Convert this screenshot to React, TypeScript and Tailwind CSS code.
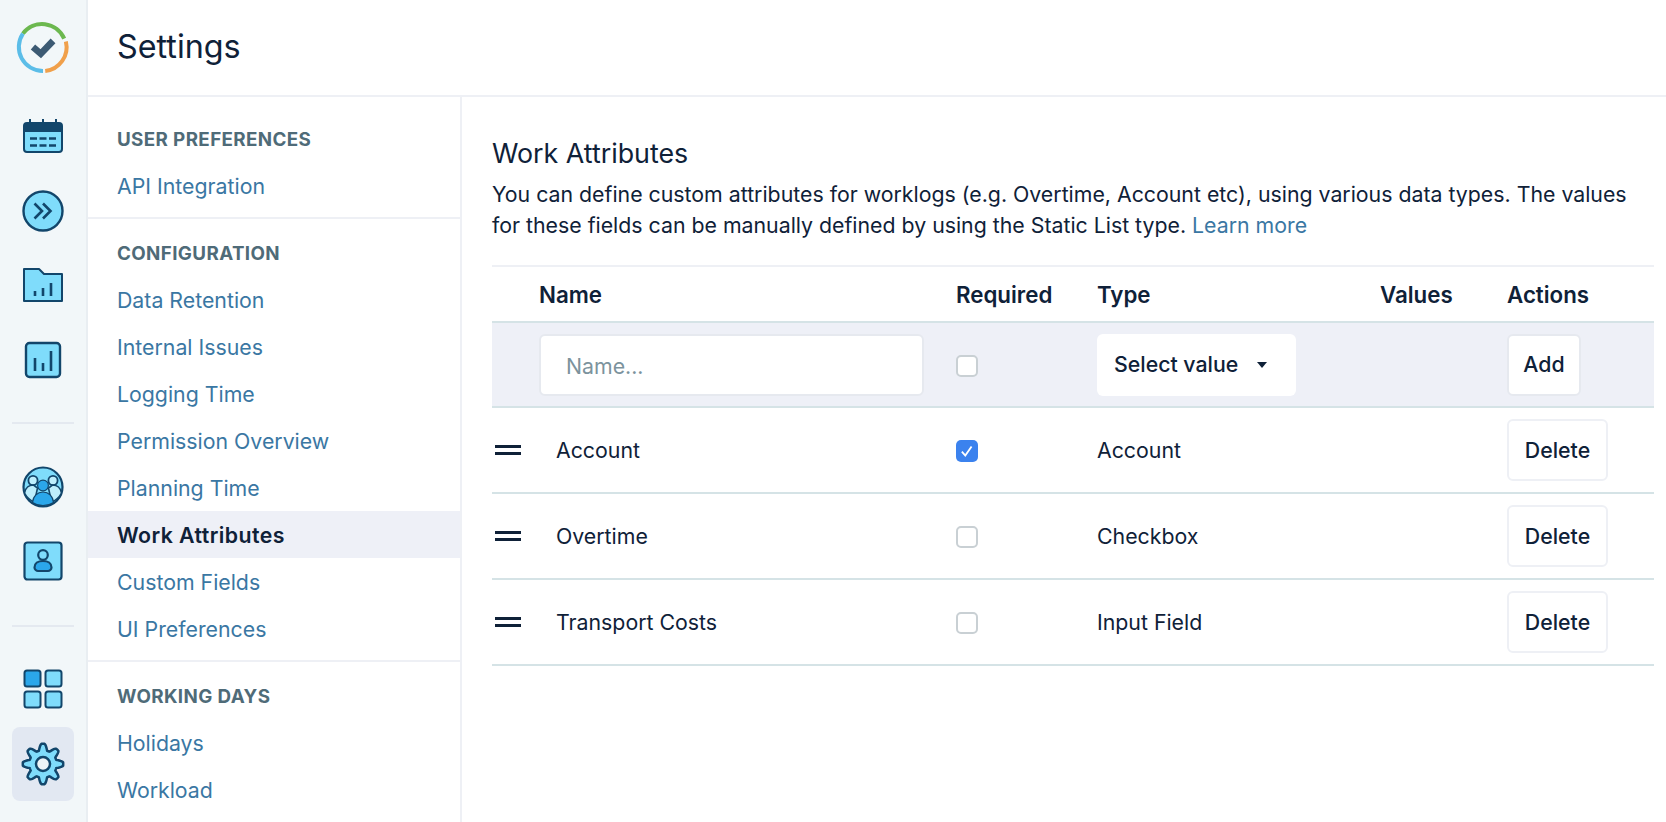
const font = { fontFamily: "Inter, 'Liberation Sans', sans-serif" };

function Logo() {
  return (
    <svg width="58" height="58" viewBox="0 0 52 52" fill="none" strokeWidth="3.6">
      <path d="M8 14 A21.500 21.500 0 0 1 45 18.500" stroke="#6cb84f" />
      <path d="M46.500 21 A21.500 21.500 0 0 1 28 47.500" stroke="#f0a04b" />
      <path d="M26 47.500 A21.500 21.500 0 0 1 8 14" stroke="#5bbde8" />
      <path d="M17 26 L24 32 L35 20.500" stroke="#3c5a73" strokeWidth="6" />
    </svg>
  );
}

function CalendarIcon() {
  return (
    <svg width="44" height="44" viewBox="0 0 44 44" fill="none">
      <rect x="3" y="9" width="38" height="29" rx="3" fill="#7fdcfb" stroke="#12466b" strokeWidth="2" />
      <path d="M3 12a3 3 0 0 1 3-3h32a3 3 0 0 1 3 3v6H3z" fill="#12466b" />
      <path d="M9 5v6M22 5v6M35 5v6" stroke="#12466b" strokeWidth="2" />
      <path d="M9 24.500h7M18.500 24.500h7M28 24.500h7M9 31.500h7M18.500 31.500h7M28 31.500h7" stroke="#12466b" strokeWidth="2.600" />
    </svg>
  );
}

function ForwardIcon() {
  return (
    <svg width="44" height="44" viewBox="0 0 44 44" fill="none">
      <circle cx="22" cy="22" r="19.500" fill="#7fdcfb" stroke="#12466b" strokeWidth="2.400" />
      <path d="M13.500 14.500l7.500 7.500-7.500 7.500M22 14.500l7.500 7.500-7.500 7.500" stroke="#12466b" strokeWidth="2.600" />
    </svg>
  );
}

function FolderIcon() {
  return (
    <svg width="44" height="44" viewBox="0 0 44 44" fill="none">
      <path d="M3 6h15l5 5h18v27H3z" fill="#7fdcfb" stroke="#12466b" strokeWidth="2" strokeLinejoin="round" />
      <path d="M14 33v-5M22 33v-8M30 33v-13" stroke="#12466b" strokeWidth="2.600" />
    </svg>
  );
}

function ChartIcon() {
  return (
    <svg width="44" height="44" viewBox="0 0 44 44" fill="none">
      <rect x="5" y="5" width="34" height="34" rx="3.500" fill="#7fdcfb" stroke="#12466b" strokeWidth="2.400" />
      <path d="M14 33v-13M22 33v-8M30 33v-20" stroke="#12466b" strokeWidth="2.600" />
    </svg>
  );
}

function TeamIcon() {
  return (
    <svg width="44" height="44" viewBox="0 0 44 44" fill="none">
      <circle cx="22" cy="22" r="19.500" fill="#7fdcfb" stroke="#12466b" strokeWidth="2.200" />
      <circle cx="12" cy="15.500" r="4.600" fill="#bdeefc" stroke="#12466b" strokeWidth="1.800" />
      <circle cx="32" cy="15.500" r="4.600" fill="#bdeefc" stroke="#12466b" strokeWidth="1.800" />
      <path d="M3.500 28c1-5.500 5-8 9-8l4 3-3 14a19 19 0 0 1-10-9zM40.500 28c-1-5.500-5-8-9-8l-4 3 3 14a19 19 0 0 0 10-9z" fill="#bdeefc" stroke="#12466b" strokeWidth="1.600" />
      <circle cx="22" cy="20.500" r="5.400" fill="#2ba7ea" stroke="#12466b" strokeWidth="1.200" />
      <path d="M11.500 37.500c.5-6.500 5-10.500 10.500-10.500s10 4 10.500 10.500a19 19 0 0 1-21 0z" fill="#2ba7ea" stroke="#12466b" strokeWidth="1.200" />
    </svg>
  );
}

function ContactIcon() {
  return (
    <svg width="44" height="44" viewBox="0 0 44 44" fill="none">
      <rect x="3.500" y="3.500" width="37" height="37" rx="3" fill="#7fdcfb" stroke="#12466b" strokeWidth="2.200" />
      <circle cx="22" cy="16" r="4.800" fill="#7fdcfb" stroke="#12466b" strokeWidth="2.200" />
      <path d="M13.500 28.500c0-4 3.500-6.500 8.500-6.500s8.500 2.500 8.500 6.500c0 2-2 3.500-3.500 3.500H17c-1.500 0-3.500-1.500-3.500-3.500z" fill="#2ba7ea" stroke="#12466b" strokeWidth="2.200" />
    </svg>
  );
}

function GridIcon() {
  return (
    <svg width="44" height="44" viewBox="0 0 44 44" fill="none" stroke="#12466b" strokeWidth="2">
      <rect x="3.500" y="3.500" width="16" height="16" rx="2.500" fill="#2ba7ea" />
      <rect x="24.500" y="3.500" width="16" height="16" rx="2.500" fill="#7fdcfb" />
      <rect x="3.500" y="24.500" width="16" height="16" rx="2.500" fill="#7fdcfb" />
      <rect x="24.500" y="24.500" width="16" height="16" rx="2.500" fill="#7fdcfb" />
    </svg>
  );
}

// eight rounded lobes, sampled around the circle, one lobe straight up
function gearPoints() {
  const pts: string[] = [];
  for (let i = 0; i < 240; i++) {
    const a = (i / 240) * Math.PI * 2;
    const wave = Math.max(-1, Math.min(1, Math.cos(a * 8) * 1.300));
    const r = 17 + 3.200 * wave;
    pts.push(`${(22 + r * Math.cos(a)).toFixed(2)},${(22 + r * Math.sin(a)).toFixed(2)}`);
  }
  return pts.join(" ");
}

function GearIcon() {
  return (
    <svg width="44" height="44" viewBox="0 0 44 44" fill="#7fdcfb" stroke="#12466b" strokeWidth="2.500" strokeLinejoin="round">
      <polygon points={gearPoints()} />
      <circle cx="22" cy="22" r="7" fill="#eef4f7" />
    </svg>
  );
}

function NavItem({ label, active }: { label: string; active?: boolean }) {
  return (
    <div className={active ? "flex h-[47px] items-center bg-[#eef0f7] pt-[2px] pl-[29px] text-[21.300px] font-semibold tracking-[0.02em] text-[#0f2138]" : "flex h-[47px] items-center pt-[2px] pl-[29px] text-[21.300px] text-[#3a77a3]"}>
      {label}
    </div>
  );
}

function NavHeading({ label }: { label: string }) {
  return <div className="mb-[10px] h-[28px] pt-[2px] pl-[29px] text-[18.800px] leading-[28px] font-bold tracking-[0.02em] text-[#4f6b78]">{label}</div>;
}

function Checkbox({ checked }: { checked?: boolean }) {
  if (checked) {
    return (
      <div className="mt-[2px] flex h-[22px] w-[22px] items-center justify-center rounded-[5px] bg-[#3b82ee]">
        <svg width="16" height="16" viewBox="0 0 14 14" fill="none">
          <path d="M2.500 7.500L5.500 11L11 3" stroke="white" strokeWidth="1.600" />
        </svg>
      </div>
    );
  }
  return <div className="mt-[2px] h-[22px] w-[22px] rounded-[5px] border-2 border-[#c9d0d4] bg-white" />;
}

const grid = "grid grid-cols-[47px_417px_141px_283px_127px_1fr] items-center";

function Row({ name, type, checked }: { name: string; type: string; checked?: boolean }) {
  return (
    <div className={`${grid} h-[86px] border-b-2 border-[#d5e3e6]`}>
      <div className="flex flex-col gap-[4px] pl-[3px]">
        <div className="h-[3px] w-[26px] bg-[#0f2138]" />
        <div className="h-[3px] w-[26px] bg-[#0f2138]" />
      </div>
      <div className="pt-[2px] pl-[17px]">{name}</div>
      <Checkbox checked={checked} />
      <div className="pt-[2px]">{type}</div>
      <div />
      <button type="button" className="h-[62px] w-[101px] rounded-[6px] border-2 border-[#eef0f5] bg-white pt-[2px] font-medium">
        Delete
      </button>
    </div>
  );
}

export default function App() {
  return (
    <div className="flex h-screen w-full overflow-hidden bg-white text-[21.300px] text-[#0f2138]" style={font}>
      {/* Rail */}
      <div className="flex w-[88px] shrink-0 flex-col items-center border-r-2 border-[#e9eef2] bg-[#f2f7f9]">
        <div className="mt-[18px] h-[58px]">
          <Logo />
        </div>
        <div className="mt-[38px] flex flex-col gap-[30.500px]">
          <CalendarIcon />
          <ForwardIcon />
          <FolderIcon />
          <ChartIcon />
        </div>
        <div className="mt-[40px] h-[2px] w-[62px] bg-[#e4e9f0]" />
        <div className="mt-[41px] flex flex-col gap-[30px]">
          <TeamIcon />
          <ContactIcon />
        </div>
        <div className="mt-[42px] h-[2px] w-[62px] bg-[#e4e9f0]" />
        <div className="mt-[40px]">
          <GridIcon />
        </div>
        <div className="mt-[16px] flex h-[74px] w-[62px] items-center justify-center rounded-[8px] bg-[#e2e8f2]">
          <GearIcon />
        </div>
      </div>

      <div className="flex min-w-0 flex-1 flex-col">
        {/* Header */}
        <div className="flex h-[97px] shrink-0 items-center border-b-2 border-[#eef0f5] pl-[29px] text-[32.300px]">Settings</div>

        <div className="flex min-h-0 flex-1">
          {/* Sidebar */}
          <div className="w-[374px] shrink-0 border-r-2 border-[#eef0f5]">
            <div className="border-b-2 border-[#eef0f5] pt-[27px] pb-[8px]">
              <NavHeading label="USER PREFERENCES" />
              <NavItem label="API Integration" />
            </div>
            <div className="border-b-2 border-[#eef0f5] pt-[19px] pb-[8px]">
              <NavHeading label="CONFIGURATION" />
              <NavItem label="Data Retention" />
              <NavItem label="Internal Issues" />
              <NavItem label="Logging Time" />
              <NavItem label="Permission Overview" />
              <NavItem label="Planning Time" />
              <NavItem label="Work Attributes" active />
              <NavItem label="Custom Fields" />
              <NavItem label="UI Preferences" />
            </div>
            <div className="pt-[19px]">
              <NavHeading label="WORKING DAYS" />
              <NavItem label="Holidays" />
              <NavItem label="Workload" />
            </div>
          </div>

          {/* Content */}
          <div className="min-w-0 flex-1 pr-[12px] pl-[30px]">
            <h2 className="mt-[38px] text-[26.800px] leading-[36px]">Work Attributes</h2>
            <p className="mt-[8px] leading-[31px]">
              You can define custom attributes for worklogs (e.g. Overtime, Account etc), using various data types. The values for these fields can be manually defined by using the Static List type. <span className="text-[#3a77a3]">Learn more</span>
            </p>

            <div className="mt-[24px] border-t-2 border-[#eef0f5]">
              <div className={`${grid} h-[56px] border-b-2 border-[#d5e3e6] pt-[1px] text-[22.300px] font-semibold`}>
                <div />
                <div>Name</div>
                <div>Required</div>
                <div>Type</div>
                <div>Values</div>
                <div>Actions</div>
              </div>

              <div className={`${grid} h-[85px] border-b-2 border-[#d5e3e6] bg-[#eef0f7]`}>
                <div />
                <input
                  type="text"
                  placeholder="Name..."
                  className="h-[62px] w-[385px] rounded-[6px] border-2 border-[#e6e9ef] bg-white pt-[2px] pl-[25px] placeholder:text-[#7c939d]"
                />
                <Checkbox />
                <button type="button" className="flex h-[62px] w-[199px] items-center rounded-[6px] bg-white pl-[17px] font-medium">
                  Select value
                  <svg className="ml-[19px]" width="10" height="6" viewBox="0 0 10 6">
                    <path d="M0 0h10L5 6z" fill="#0f2138" />
                  </svg>
                </button>
                <div />
                <button type="button" className="h-[62px] w-[74px] rounded-[6px] border-2 border-[#e6e9ef] bg-white font-medium">
                  Add
                </button>
              </div>

              <Row name="Account" type="Account" checked />
              <Row name="Overtime" type="Checkbox" />
              <Row name="Transport Costs" type="Input Field" />
            </div>
          </div>
        </div>
      </div>
    </div>
  );
}
